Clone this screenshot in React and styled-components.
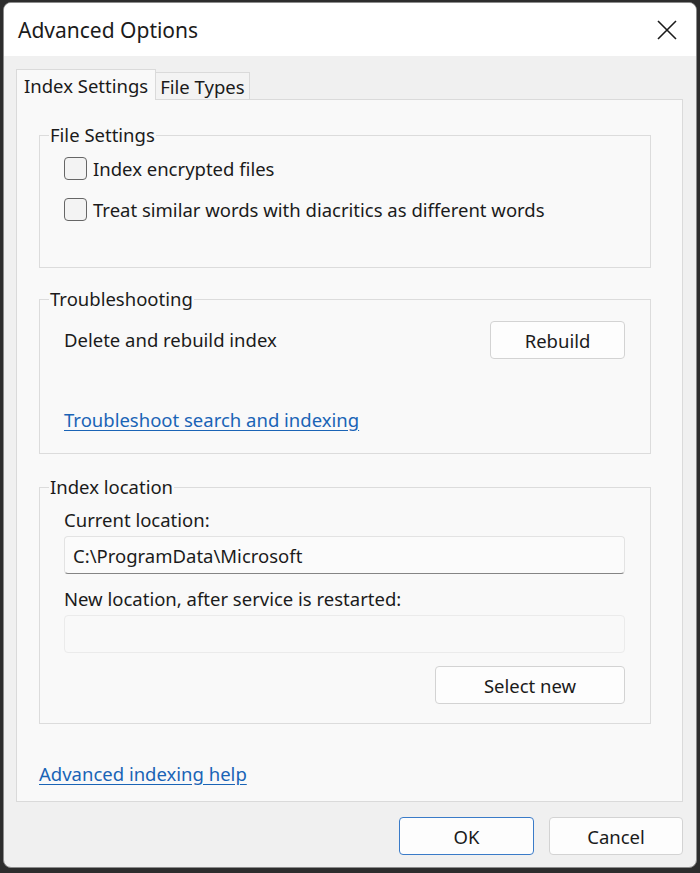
import styled, { createGlobalStyle } from "styled-components"

const GlobalStyle = createGlobalStyle`
  html, body {
    margin: 0;
    padding: 0;
    background: #2d2d2d;
  }
  body {
    font-family: "Noto Sans", "Open Sans", sans-serif;
    color: #1b1b1b;
  }
  * { box-sizing: border-box; }
`

const CloseIcon = () => (
  <svg width="22" height="22" viewBox="0 0 22 22">
    <path d="M2 2 L20 20 M20 2 L2 20" stroke="#1b1b1b" strokeWidth="1.6" fill="none" />
  </svg>
)

const Checkbox = ({ label }) => (
  <CheckRow>
    <Box />
    <span>{label}</span>
  </CheckRow>
)

const App = () => {
  return (
    <>
      <GlobalStyle />
      <Screen>
        <Window>
          <TitleBar>
            <Title>Advanced Options</Title>
            <CloseButton aria-label="Close">
              <CloseIcon />
            </CloseButton>
          </TitleBar>

          <Body>
            <TabStrip>
              <Tab $active>Index Settings</Tab>
              <Tab>File Types</Tab>
            </TabStrip>

            <Panel>
              <Group>
                <Legend>File Settings</Legend>
                <GroupBody $pad="11px 25px 46px 24px" $gap="18px">
                  <Checkbox label="Index encrypted files" />
                  <Checkbox label="Treat similar words with diacritics as different words" />
                </GroupBody>
              </Group>

              <Group>
                <Legend>Troubleshooting</Legend>
                <GroupBody $pad="11px 25px 22px 24px" $gap="50px">
                  <Row>
                    <Text>Delete and rebuild index</Text>
                    <Button $width="135px">Rebuild</Button>
                  </Row>
                  <Link href="#">Troubleshoot search and indexing</Link>
                </GroupBody>
              </Group>

              <Group $top="22px">
                <Legend>Index location</Legend>
                <GroupBody $pad="11px 25px 19px 24px" $gap="0">
                  <Text>Current location:</Text>
                  <Field $top="5px" $filled>C:\ProgramData\Microsoft</Field>
                  <Text $top="14px">New location, after service is restarted:</Text>
                  <Field $top="5px" />
                  <ButtonRow $top="13px">
                    <Button $width="190px">Select new</Button>
                  </ButtonRow>
                </GroupBody>
              </Group>

              <HelpLink href="#">Advanced indexing help</HelpLink>
            </Panel>

            <Footer>
              <Button $width="135px" $primary>OK</Button>
              <Button $width="134px">Cancel</Button>
            </Footer>
          </Body>
        </Window>
      </Screen>
    </>
  )
}

const Screen = styled.div`
  width: 700px;
  height: 873px;
  padding: 2px 3px 5px 3px;
`

const Window = styled.div`
  height: 100%;
  display: flex;
  flex-direction: column;
  background: #f0f0f0;
  border: 1px solid #8c8c8c;
  border-radius: 8px;
  overflow: hidden;
`

const TitleBar = styled.div`
  height: 53px;
  flex: none;
  display: flex;
  align-items: center;
  justify-content: space-between;
  padding: 0 18px 0 14px;
  background: #ffffff;
`

const Title = styled.div`
  font-size: 21px;
  padding-top: 1px;
`

const CloseButton = styled.button`
  border: none;
  background: none;
  padding: 0;
  width: 22px;
  height: 22px;
  display: flex;
`

const Body = styled.div`
  flex: 1;
  display: flex;
  flex-direction: column;
  padding: 14px 13px 0 12px;
`

const TabStrip = styled.div`
  display: flex;
  align-items: flex-end;
  height: 30px;
  position: relative;
  z-index: 1;
  margin-bottom: -1px;
`

const Tab = styled.div`
  height: ${(p) => (p.$active ? "31px" : "28px")};
  padding: ${(p) => (p.$active ? "0 7px" : "0 4px")};
  display: flex;
  align-items: center;
  font-size: 18.5px;
  background: ${(p) => (p.$active ? "#f9f9f9" : "#f3f3f3")};
  border: 1px solid #dadada;
  border-bottom: ${(p) => (p.$active ? "none" : "1px solid #dadada")};
  border-left: ${(p) => (p.$active ? "1px solid #dadada" : "none")};
`

const Panel = styled.div`
  height: 703px;
  flex: none;
  display: flex;
  flex-direction: column;
  padding: 24px 31px 0 22px;
  background: #f9f9f9;
  border: 1px solid #dadada;
`

const Group = styled.fieldset`
  margin: ${(p) => p.$top || "20px"} 0 0 0;
  padding: 0;
  border: 1px solid #dcdcdc;
  &:first-child { margin-top: 0; }
`

const Legend = styled.legend`
  margin-left: 9px;
  padding: 0 1px;
  font-size: 18.5px;
  line-height: 22px;
`

const GroupBody = styled.div`
  display: flex;
  flex-direction: column;
  gap: ${(p) => p.$gap};
  padding: ${(p) => p.$pad};
`

const CheckRow = styled.label`
  display: flex;
  align-items: center;
  gap: 6px;
  height: 23px;
  font-size: 18.5px;
`

const Box = styled.span`
  width: 23px;
  height: 23px;
  flex: none;
  border: 1.5px solid #666666;
  border-radius: 4px;
  background: #f3f3f3;
`

const Row = styled.div`
  display: flex;
  align-items: center;
  justify-content: space-between;
`

const Text = styled.div`
  font-size: 18.5px;
  line-height: 22px;
  margin-top: ${(p) => p.$top || "0"};
`

const Link = styled.a`
  align-self: flex-start;
  font-size: 18.5px;
  line-height: 22px;
  color: #1a64b6;
  text-decoration: underline;
  text-underline-offset: 3px;
`

const HelpLink = styled(Link)`
  margin-top: 39px;
`

const Field = styled.div`
  margin-top: ${(p) => p.$top};
  height: 38px;
  display: flex;
  align-items: center;
  padding: 0 8px;
  font-size: 18.5px;
  border-radius: 4px;
  background: ${(p) => (p.$filled ? "#fbfbfb" : "#f9f9f9")};
  border: 1px solid ${(p) => (p.$filled ? "#e3e3e3" : "#ebebeb")};
  border-bottom: ${(p) => (p.$filled ? "1.5px solid #858585" : "1px solid #ebebeb")};
`

const ButtonRow = styled.div`
  display: flex;
  justify-content: flex-end;
  margin-top: ${(p) => p.$top};
`

const Button = styled.button`
  width: ${(p) => p.$width};
  height: 38px;
  font-family: inherit;
  font-size: 18.5px;
  color: #1b1b1b;
  background: #fdfdfd;
  border: 1px solid ${(p) => (p.$primary ? "#3a7bc8" : "#d3d3d3")};
  border-radius: 4px;
  padding: 0;
`

const Footer = styled.div`
  display: flex;
  justify-content: flex-end;
  gap: 15px;
  margin-top: 15px;
`

export default App
